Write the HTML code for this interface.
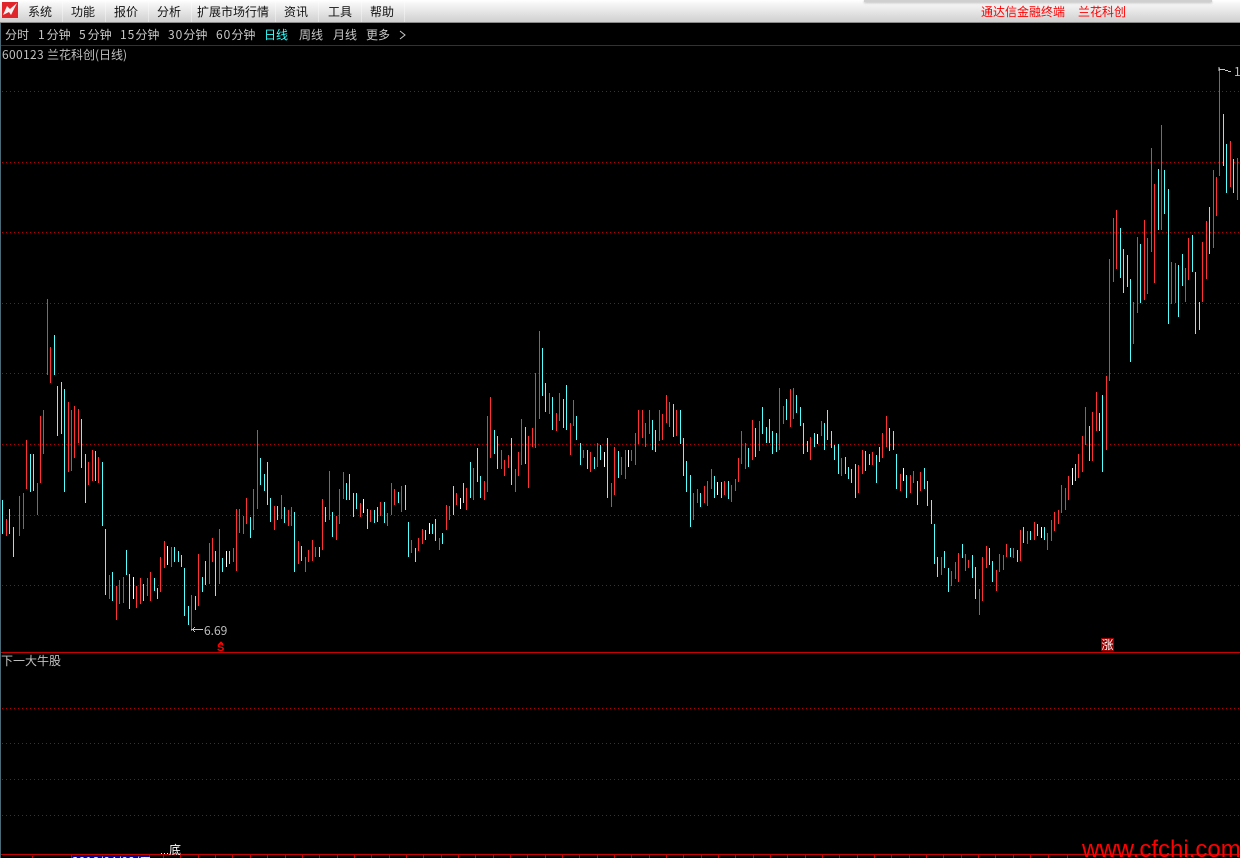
<!DOCTYPE html>
<html lang="zh"><head><meta charset="utf-8"><title>K线</title>
<style>
html,body{margin:0;padding:0;background:#000;width:1240px;height:858px;overflow:hidden}
body{position:relative;font:12px/14px "WenQuanYi Zen Hei","Noto Sans CJK SC",sans-serif}
.t{position:absolute;white-space:nowrap}
#top{position:absolute;left:0;top:0;width:1240px;height:22px;background:linear-gradient(#fff 0,#f4f4f4 20%,#d0d0d0 100%);border-bottom:1px solid #8a8a8a}
#shade{position:absolute;left:864px;top:0;width:348px;height:2px;background:#cfcfcf;box-shadow:0 1px 2px #bbb}
.s{position:absolute;top:0;width:1px;height:22px;background:rgba(255,255,255,.4)}
.m{color:#111;top:5px}
.b{color:#c8c8c8;top:28px}
.r{color:#f00;top:5px}
.d{letter-spacing:1px}
.d1{letter-spacing:2px}
svg{position:absolute;left:0;top:0}
</style></head><body>
<div id="top"><div id="shade"></div>
<div class="s" style="left:62px"></div><div class="s" style="left:105px"></div><div class="s" style="left:148px"></div><div class="s" style="left:191px"></div><div class="s" style="left:275px"></div><div class="s" style="left:318px"></div><div class="s" style="left:361px"></div><div class="s" style="left:404px"></div></div>
<svg width="22" height="22" style="left:0;top:0"><rect x="2" y="2" width="16" height="16" fill="#e0262a"/><path d="M17 3 L10 9 L7 6 L3 15 L9 12 L11 15 Z" fill="#f4f4f4"/></svg>
<span class="t m" style="left:28px">系统</span>
<span class="t m" style="left:71px">功能</span>
<span class="t m" style="left:114px">报价</span>
<span class="t m" style="left:157px">分析</span>
<span class="t m" style="left:197px">扩展市场行情</span>
<span class="t m" style="left:284px">资讯</span>
<span class="t m" style="left:328px">工具</span>
<span class="t m" style="left:370px">帮助</span>
<span class="t r" style="left:981px">通达信金融终端</span>
<span class="t r" style="left:1078px">兰花科创</span>
<span class="t b" style="left:5px">分时</span>
<span class="t b" style="left:38px"><span class="d1">1</span>分钟</span>
<span class="t b" style="left:79px"><span class="d1">5</span>分钟</span>
<span class="t b" style="left:120px"><span class="d">15</span>分钟</span>
<span class="t b" style="left:168px"><span class="d">30</span>分钟</span>
<span class="t b" style="left:216px"><span class="d">60</span>分钟</span>
<span class="t b" style="left:264px;color:#3ff">日线</span>
<span class="t b" style="left:299px">周线</span>
<span class="t b" style="left:333px">月线</span>
<span class="t b" style="left:366px">更多</span>
<svg width="1240" height="858" shape-rendering="crispEdges">
<path d="M0 45.5H1240" stroke="#a80000"/>
<path d="M0.5 23V858" stroke="#4a6a78"/>
<path d="M400 31l5 4-5 4" fill="none" stroke="#c8c8c8" shape-rendering="auto"/>
<path d="M2 91.5H1240M2 162.5H1240M2 232.5H1240M2 303.5H1240M2 373.5H1240M2 444.5H1240M2 515.5H1240M2 585.5H1240M2 708.5H1240M2 743.5H1240M2 779.5H1240M2 815.5H1240" stroke="#b00000" stroke-dasharray="1 3"/>
<path fill="none" stroke="#ff3232" d="M6.5 519V536M19.5 496V536M23.5 493V529M26.5 440V489M37.5 483V515M40.5 416V483M43.5 410V454M47.5 299V375M50.5 347V383M68.5 402V472M71.5 410V471M74.5 406V458M78.5 409V443M88.5 462V485M92.5 450V481M98.5 457V483M109.5 575V599M116.5 586V620M119.5 580V604M123.5 577V603M136.5 586V608M140.5 578V604M147.5 578V596M150.5 572V601M160.5 557V592M164.5 541V568M171.5 547V567M191.5 595V631M198.5 554V606M209.5 543V584M212.5 538V562M219.5 529V584M233.5 548V562M236.5 509V571M239.5 509V533M243.5 516V534M246.5 498V524M253.5 489V530M257.5 430V509M274.5 506V530M281.5 495V519M288.5 510V526M291.5 507V526M298.5 541V564M305.5 557V572M308.5 550V562M312.5 540V561M315.5 547V557M322.5 499V550M329.5 471V520M336.5 516V540M339.5 489V524M343.5 472V499M360.5 503V517M370.5 510V522M380.5 502V516M387.5 513V526M391.5 483V515M394.5 489V505M401.5 486V512M411.5 540V553M418.5 538V551M422.5 529V544M439.5 538V550M446.5 505V530M449.5 506V520M456.5 493V505M466.5 488V510M473.5 468V500M484.5 481V500M487.5 416V492M490.5 397V458M501.5 450V469M504.5 460V476M508.5 455V468M515.5 469V492M518.5 452V476M521.5 419V465M528.5 436V488M532.5 428V447M535.5 373V448M539.5 331V419M549.5 393V414M556.5 413V431M559.5 393V421M570.5 423V455M573.5 400V426M583.5 450V458M590.5 452V472M597.5 443V467M611.5 483V507M614.5 447V495M621.5 457V475M625.5 450V479M631.5 450V461M635.5 433V465M638.5 410V444M642.5 410V438M645.5 423V447M649.5 410V434M659.5 410V441M662.5 414V440M666.5 395V423M669.5 402V427M676.5 410V436M693.5 493V520M697.5 489V503M704.5 486V503M707.5 481V506M711.5 469V489M724.5 481V495M731.5 485V502M735.5 479V491M738.5 458V482M741.5 431V464M745.5 443V469M752.5 420V460M759.5 421V451M779.5 388V450M783.5 406V424M790.5 389V427M793.5 388V419M810.5 437V460M821.5 421V436M841.5 458V476M858.5 465V493M862.5 450V474M872.5 452V465M882.5 433V458M886.5 416V447M900.5 474V491M910.5 475V493M913.5 471V483M920.5 472V491M941.5 557V575M951.5 571V586M955.5 562V579M958.5 553V582M965.5 554V571M968.5 560V568M979.5 589V615M982.5 557V601M986.5 546V568M996.5 570V591M999.5 554V572M1003.5 555V570M1006.5 544V557M1013.5 548V558M1020.5 530V561M1027.5 531V544M1034.5 522V540M1047.5 533V550M1051.5 520V541M1054.5 512V531M1058.5 510V524M1061.5 485V513M1065.5 488V510M1068.5 476V500M1078.5 454V478M1082.5 436V472M1085.5 407V445M1092.5 412V461M1096.5 392V431M1106.5 376V450M1109.5 259V381M1113.5 218V282M1116.5 210V269M1133.5 302V344M1137.5 237V313M1144.5 220V300M1147.5 238V294M1151.5 148V252M1154.5 184V283M1161.5 125V230M1171.5 262V304M1175.5 263V303M1185.5 268V302M1188.5 238V280M1202.5 242V302M1206.5 221V279M1213.5 170V248M1216.5 177V216M1219.5 68V176M1230.5 141V187M1237.5 158V200"/>
<path fill="none" stroke="#54ffff" d="M2.5 500V534M9.5 509V534M13.5 527V557M30.5 454V492M33.5 454V491M54.5 335V375M57.5 386V436M61.5 382V434M64.5 389V492M81.5 419V468M85.5 454V503M95.5 451V481M102.5 462V526M105.5 529V595M112.5 572V601M126.5 550V575M129.5 574V609M143.5 584V601M154.5 578V591M157.5 588V599M174.5 547V562M178.5 551V562M181.5 555V567M184.5 568V616M188.5 606V625M195.5 596V610M202.5 577V592M205.5 561V585M215.5 551V596M222.5 558V572M229.5 551V564M250.5 517V538M260.5 458V485M264.5 474V491M267.5 462V505M270.5 498V522M277.5 506V520M284.5 507V523M294.5 512V572M301.5 546V561M319.5 547V557M325.5 507V522M332.5 512V537M346.5 483V500M349.5 474V500M353.5 493V517M356.5 493V509M367.5 509V529M374.5 510V523M377.5 507V522M384.5 502V523M398.5 492V503M405.5 485V510M408.5 522V557M415.5 548V562M425.5 530V540M432.5 524V534M435.5 519V541M442.5 533V544M453.5 486V515M463.5 483V503M470.5 462V498M477.5 448V482M480.5 476V498M494.5 430V454M497.5 436V469M511.5 438V485M525.5 427V464M542.5 348V396M545.5 383V412M552.5 397V430M563.5 399V428M566.5 385V430M576.5 416V440M580.5 443V465M587.5 450V469M594.5 457V469M600.5 445V460M607.5 438V498M618.5 451V478M652.5 420V450M655.5 430V452M673.5 404V437M680.5 410V444M683.5 438V476M686.5 461V492M690.5 475V527M700.5 493V507M714.5 476V498M721.5 482V498M728.5 481V499M748.5 448V467M755.5 428V457M762.5 407V434M766.5 427V443M769.5 419V443M772.5 431V454M776.5 433V452M786.5 399V420M796.5 395V413M800.5 407V426M803.5 423V454M807.5 441V452M814.5 433V447M824.5 423V450M827.5 410V440M831.5 431V448M834.5 445V460M838.5 444V474M845.5 457V474M848.5 467V479M851.5 469V483M855.5 464V498M865.5 451V471M869.5 454V465M876.5 455V483M879.5 447V462M889.5 428V451M893.5 431V450M896.5 454V489M906.5 475V498M917.5 481V505M924.5 468V489M927.5 481V506M931.5 500V524M934.5 524V564M937.5 557V577M944.5 551V568M948.5 568V592M962.5 544V558M972.5 555V578M975.5 567V599M989.5 548V565M992.5 561V582M1010.5 548V557M1017.5 550V562M1023.5 527V543M1030.5 531V540M1037.5 524V536M1044.5 527V540M1075.5 464V481M1089.5 426V461M1099.5 413V431M1102.5 395V472M1120.5 228V278M1123.5 249V293M1127.5 255V287M1130.5 279V362M1140.5 244V303M1158.5 169V230M1164.5 170V214M1168.5 189V324M1178.5 265V317M1182.5 254V286M1192.5 235V272M1195.5 272V334M1199.5 302V330M1209.5 207V254M1223.5 114V166M1226.5 144V193M1233.5 159V193"/>
<path fill="none" stroke="#ffffff" d="M133.5 577V599M167.5 546V565M226.5 551V567M363.5 499V513M429.5 523V534M460.5 498V509M604.5 452V467M628.5 450V467M717.5 482V495M817.5 434V444M903.5 468V481M1041.5 527V538M1072.5 468V485"/>
<path d="M1 652.5H1240M1 854.5H1240" stroke="#c80000"/>
<rect x="72" y="855" width="77" height="3" fill="#00009c"/>
<path fill="none" stroke="#c80000" d="M32.5 856V858M71.5 855V858M149.5 855V858M163.5 855V858M180.5 855V858M198.5 855V858M215.5 855V858M232.5 855V858M250.5 855V858M267.5 855V858M285.5 855V858M302.5 855V858M319.5 855V858M337.5 855V858M354.5 855V858M371.5 855V858M389.5 855V858M406.5 855V858M423.5 855V858M441.5 855V858M458.5 855V858M475.5 855V858M493.5 855V858M510.5 855V858M527.5 855V858M545.5 855V858M562.5 855V858M579.5 855V858M597.5 855V858M614.5 855V858M631.5 855V858M649.5 855V858M666.5 855V858M683.5 855V858M701.5 855V858M718.5 855V858M735.5 855V858M753.5 855V858M770.5 855V858M787.5 855V858M805.5 855V858M822.5 855V858M839.5 855V858M857.5 855V858M874.5 855V858M891.5 855V858M909.5 855V858M926.5 855V858M943.5 855V858M961.5 855V858M978.5 855V858M995.5 855V858M1013.5 855V858M1030.5 855V858M1048.5 855V858M1067.5 855V858"/>
<path d="M191 629.5H203" stroke="#c8c8c8"/>
<path d="M194 627.5h1M193 628.5h1M193 630.5h1M194 631.5h1" stroke="#c8c8c8"/>
<path d="M1219 69.5h3M1219 67v4M1222 69.5h3M1225 70.5h3M1228 71.5h3" stroke="#c8c8c8"/>
<path d="M221 641l2.5 3h-5z" fill="#f00"/>
<path d="M161 853.5h1M164 853.5h1M167 853.5h1" stroke="#fff"/>
<rect x="1101" y="638" width="13" height="13" fill="#980000"/>
</svg>
<span class="t" style="left:2px;top:48px;color:#c0c0c0;letter-spacing:.33px">600123</span>
<span class="t" style="left:47px;top:48px;color:#c0c0c0">兰花科创(日线)</span>
<span class="t" style="left:204px;top:624px;color:#c0c0c0">6.69</span>
<span class="t" style="left:1234px;top:65px;color:#c0c0c0">1</span>
<span class="t" style="left:217px;top:642px;color:#f00;font:bold 11px/12px 'Liberation Sans',sans-serif">S</span>
<span class="t" style="left:1101px;top:638px;width:13px;text-align:center;color:#fff;font-size:12px;line-height:13px">涨</span>
<span class="t" style="left:1px;top:654px;color:#c0c0c0">下一大牛股</span>
<span class="t" style="left:169px;top:843px;color:#fff">底</span>
<span class="t" style="left:72px;top:855px;color:#fff;height:3px;overflow:hidden;line-height:13px">2016/04/08/五</span>
<span class="t" style="left:1082px;top:836px;color:#f00;font:24px/27px 'Liberation Sans',sans-serif">www.cfchi.com</span>
</body></html>
